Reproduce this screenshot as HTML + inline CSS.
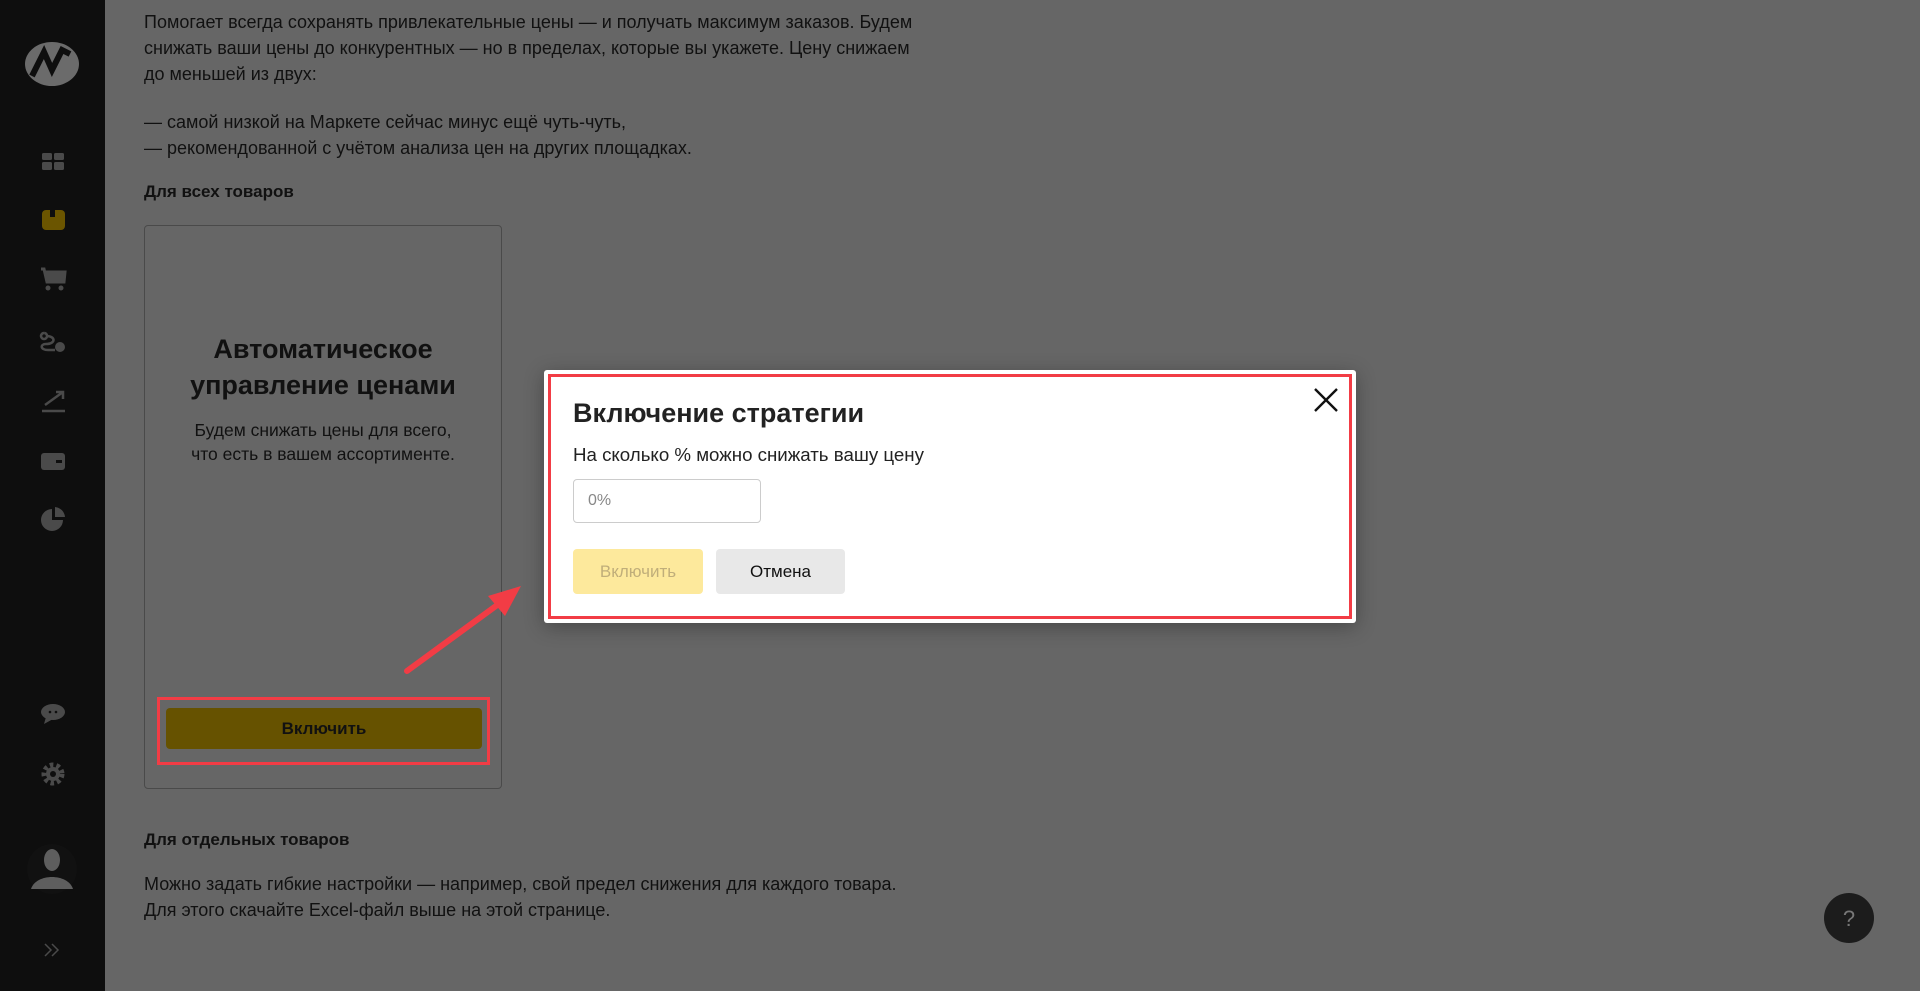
<!DOCTYPE html>
<html><head><meta charset="utf-8"><style>
*{margin:0;padding:0;box-sizing:border-box}
body{width:1920px;height:991px;overflow:hidden;background:#666;font-family:"Liberation Sans",sans-serif;color:#111;position:relative}
.side{position:absolute;left:0;top:0;width:105px;height:991px;background:#0e0e0e}
.t{position:absolute;left:144px;font-size:18px;line-height:26px;color:#111}
.b{font-weight:bold;font-size:17px}
.card{position:absolute;left:144px;top:225px;width:358px;height:564px;border:1px solid #4a4a4a;border-radius:4px}
.ct{position:absolute;left:0;width:100%;text-align:center}
.modal{position:absolute;left:544px;top:370px;width:812px;height:253px;background:#fff;border-radius:3px;box-shadow:0 4px 20px rgba(0,0,0,.3)}
.modal .frame{position:absolute;left:4px;top:4px;right:4px;bottom:4px;border:3px solid #f23c45}
</style></head><body>
<div class="side">
<svg width="105" height="991" style="position:absolute;left:0;top:0">
<ellipse cx="52" cy="64" rx="27" ry="22" fill="#6b6b6b"/>
<path d="M32 76 L44 52 L52 70 L62 50 L70 54" stroke="#0e0e0e" stroke-width="6" fill="none"/>
<g fill="#4a4a4a">
<rect x="42" y="153" width="10" height="7" rx="1.5"/><rect x="54" y="153" width="10" height="7" rx="1.5"/>
<rect x="42" y="162" width="10" height="8" rx="1.5"/><rect x="54" y="162" width="10" height="8" rx="1.5"/>
<circle cx="48" cy="288" r="2.5"/><circle cx="61" cy="288" r="2.5"/>
<circle cx="60" cy="347" r="5"/>
<rect x="41" y="453" width="24" height="17" rx="3"/>
<path d="M52 509 L52 520 L63 520 A11 11 0 1 1 52 509Z"/><path d="M55 507 A11 11 0 0 1 65 517 L55 517Z"/>
<ellipse cx="53" cy="712" rx="12" ry="8"/><path d="M46 717 L44 724 L53 719Z"/>
<circle cx="53" cy="774" r="7"/>
</g>
<rect x="42" y="210" width="23" height="20" rx="4" fill="#6b5500"/><rect x="50" y="210" width="5" height="7" fill="#0e0e0e"/>
<path d="M41 269 L44 269 L47 282 L64 282 L65 272 L45 272" stroke="#4a4a4a" stroke-width="3" fill="#4a4a4a"/>
<path d="M44 333 a3 3 0 1 0 0.1 0 M46 336 C56 336 56 344 46 344 C40 344 40 350 48 350 L55 350" stroke="#4a4a4a" stroke-width="2.5" fill="none"/>
<path d="M42 411 L65 411 M45 405 L63 392 M56 392 L63 392 L63 399" stroke="#4a4a4a" stroke-width="2.5" fill="none"/>
<rect x="56" y="460" width="6" height="3" fill="#0e0e0e"/>
<circle cx="50" cy="712" r="1.3" fill="#0e0e0e"/><circle cx="56" cy="712" r="1.3" fill="#0e0e0e"/>
<circle cx="53" cy="774" r="9" fill="none" stroke="#4a4a4a" stroke-width="5" stroke-dasharray="3.5 3"/><circle cx="53" cy="774" r="3" fill="#0e0e0e"/>
<circle cx="52" cy="869" r="25" fill="#111"/><ellipse cx="52" cy="860" rx="8" ry="11" fill="#5e5e5e"/><path d="M31 889 C36 873 68 873 73 889Z" fill="#5e5e5e"/>
<path d="M45 944 L51 950 L45 956 M52 944 L58 950 L52 956" stroke="#4a4a4a" stroke-width="1.5" fill="none"/>
</svg></div>
<div class="t" style="top:9px">Помогает всегда сохранять привлекательные цены — и получать максимум заказов. Будем<br>снижать ваши цены до конкурентных — но в пределах, которые вы укажете. Цену снижаем<br>до меньшей из двух:</div>
<div class="t" style="top:109px">— самой низкой на Маркете сейчас минус ещё чуть-чуть,<br>— рекомендованной с учётом анализа цен на других площадках.</div>
<div class="t b" style="top:179px">Для всех товаров</div>
<div class="card">
<div class="ct" style="top:105px;font-size:27px;line-height:36px;font-weight:bold">Автоматическое<br>управление ценами</div>
<div class="ct" style="top:192px;font-size:17.5px;line-height:24px">Будем снижать цены для всего,<br>что есть в вашем ассортименте.</div>
</div>
<div style="position:absolute;left:157px;top:697px;width:333px;height:68px;border:3px solid #f23c45"></div>
<div style="position:absolute;left:166px;top:708px;width:316px;height:41px;background:#665200;border-radius:4px;text-align:center;line-height:41px;font-size:17px;font-weight:bold;color:#111">Включить</div>
<div class="t b" style="top:827px">Для отдельных товаров</div>
<div class="t" style="top:871px">Можно задать гибкие настройки — например, свой предел снижения для каждого товара.<br>Для этого скачайте Excel-файл выше на этой странице.</div>
<svg width="1920" height="991" style="position:absolute;left:0;top:0"><path d="M407 671 L500 603" stroke="#f23c45" stroke-width="6" stroke-linecap="round"/><path d="M521 586 L488 596 L505 616Z" fill="#f23c45"/>
<circle cx="1849" cy="918" r="25" fill="#1c1c1c"/><text x="1849" y="926" fill="#777" font-size="22" text-anchor="middle" font-family="Liberation Sans">?</text></svg>
<div class="modal"><div class="frame"></div>
<div style="position:absolute;left:29px;top:28px;font-size:27px;font-weight:bold;color:#222">Включение стратегии</div>
<div style="position:absolute;left:29px;top:74px;font-size:18.7px;color:#222">На сколько % можно снижать вашу цену</div>
<div style="position:absolute;left:29px;top:109px;width:188px;height:44px;border:1px solid #ccc;border-radius:4px;font-size:16px;color:#888;line-height:42px;padding-left:14px">0%</div>
<div style="position:absolute;left:29px;top:179px;width:130px;height:45px;background:#fde99c;border-radius:4px;text-align:center;line-height:45px;font-size:17px;color:#c0ae7a">Включить</div>
<div style="position:absolute;left:172px;top:179px;width:129px;height:45px;background:#e8e8e8;border-radius:4px;text-align:center;line-height:45px;font-size:17px;color:#111">Отмена</div>
<svg style="position:absolute;left:769px;top:17px" width="26" height="26"><path d="M2 2L24 24M24 2L2 24" stroke="#111" stroke-width="2.4"/></svg>
</div>
</body></html>
